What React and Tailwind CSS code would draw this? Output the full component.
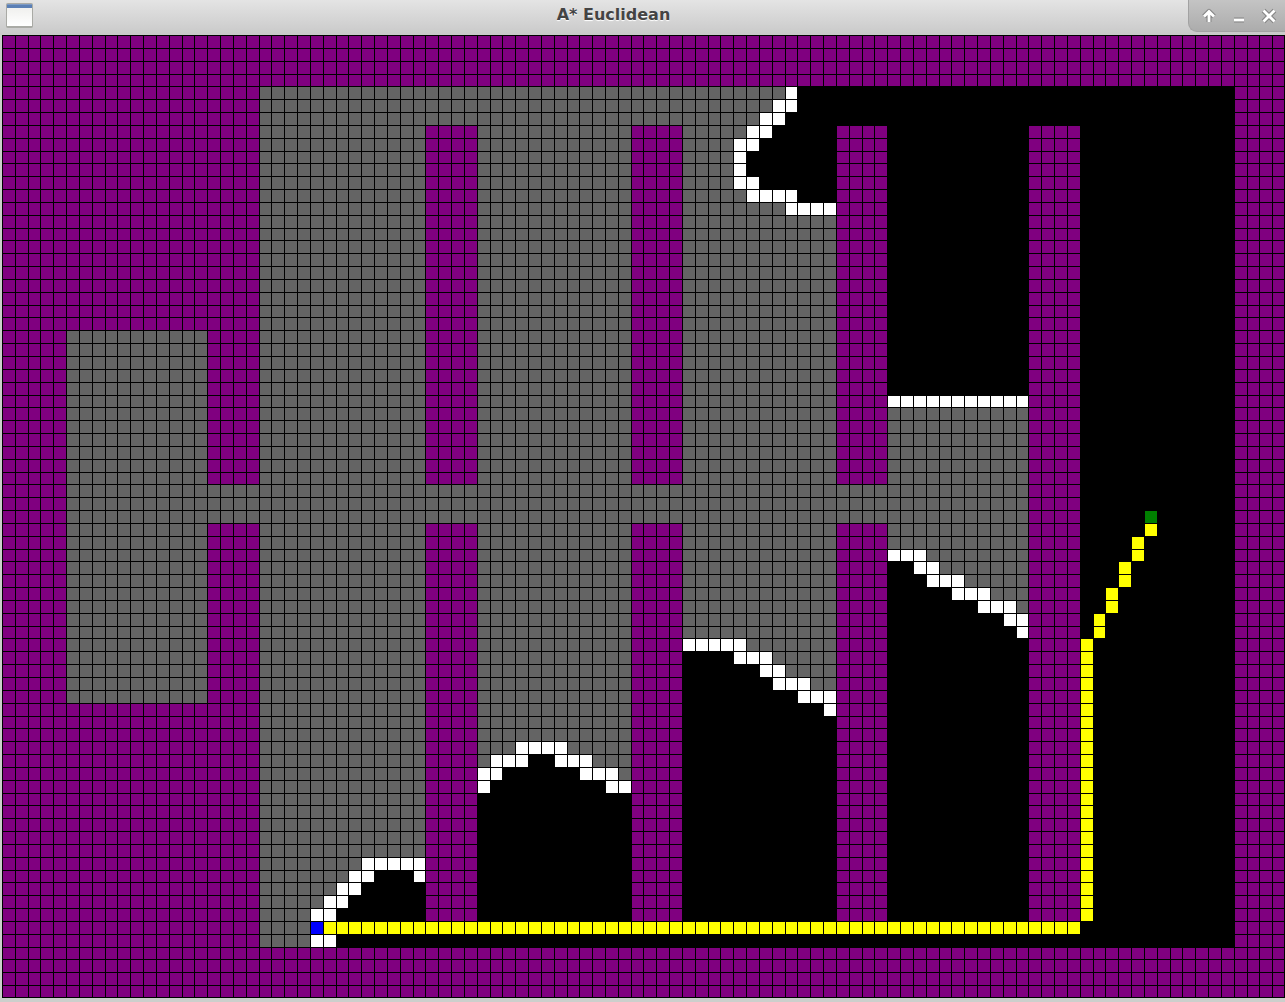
import React from "react";

const COLS = 100;
const ROWS = 75;

const COLORS = {
  wall: "bg-[#800080]",
  closed: "bg-[#646464]",
  open: "bg-white",
  path: "bg-[#ffff00]",
  start: "bg-[#008000]",
  goal: "bg-[#0000ff]",
  empty: "bg-black",
};

// [kind, first column, last column, first row, last row]; later areas cover earlier ones
const AREAS = [
  ["wall", 0, 99, 0, 74],
  ["empty", 20, 95, 4, 70],
  ["closed", 5, 15, 23, 51],
  // first hall
  ["closed", 20, 32, 4, 64],
  ["closed", 20, 26, 65, 65],
  ["closed", 20, 25, 66, 66],
  ["closed", 20, 24, 67, 67],
  ["closed", 20, 23, 68, 70],
  ["open", 28, 32, 64, 64],
  ["closed", 20, 27, 64, 64],
  ["open", 27, 28, 65, 65],
  ["open", 32, 32, 65, 65],
  ["open", 26, 27, 66, 66],
  ["open", 25, 26, 67, 67],
  ["open", 24, 25, 68, 68],
  ["open", 24, 25, 70, 70],
  // second hall
  ["closed", 33, 48, 4, 55],
  ["closed", 37, 37, 56, 56],
  ["closed", 46, 48, 56, 56],
  ["closed", 48, 48, 57, 57],
  ["open", 40, 43, 55, 55],
  ["open", 38, 40, 56, 56],
  ["open", 43, 45, 56, 56],
  ["open", 37, 38, 57, 57],
  ["open", 45, 47, 57, 57],
  ["open", 37, 37, 58, 58],
  ["open", 47, 48, 58, 58],
  // third hall
  ["closed", 49, 60, 4, 4],
  ["closed", 49, 59, 5, 5],
  ["closed", 49, 58, 6, 6],
  ["closed", 49, 57, 7, 7],
  ["closed", 49, 56, 8, 11],
  ["closed", 49, 57, 12, 12],
  ["closed", 49, 60, 13, 13],
  ["closed", 49, 64, 14, 47],
  ["closed", 60, 64, 48, 48],
  ["closed", 61, 64, 49, 49],
  ["closed", 63, 64, 50, 50],
  ["open", 61, 61, 4, 4],
  ["open", 60, 61, 5, 5],
  ["open", 59, 60, 6, 6],
  ["open", 58, 59, 7, 7],
  ["open", 57, 58, 8, 8],
  ["open", 57, 57, 9, 10],
  ["open", 57, 58, 11, 11],
  ["open", 58, 61, 12, 12],
  ["open", 61, 64, 13, 13],
  ["open", 53, 57, 47, 47],
  ["open", 57, 59, 48, 48],
  ["open", 59, 60, 49, 49],
  ["open", 60, 62, 50, 50],
  ["open", 62, 64, 51, 51],
  ["open", 64, 64, 52, 52],
  // fourth hall
  ["open", 69, 79, 28, 28],
  ["closed", 69, 79, 29, 39],
  ["open", 69, 71, 40, 40],
  ["closed", 72, 79, 40, 40],
  ["open", 71, 72, 41, 41],
  ["closed", 73, 79, 41, 41],
  ["open", 72, 74, 42, 42],
  ["closed", 75, 79, 42, 42],
  ["open", 74, 76, 43, 43],
  ["closed", 77, 79, 43, 43],
  ["open", 76, 78, 44, 44],
  ["closed", 79, 79, 44, 44],
  ["open", 78, 79, 45, 45],
  ["open", 79, 79, 46, 46],
  // dividing walls
  ["wall", 33, 36, 7, 68],
  ["wall", 49, 52, 7, 68],
  ["wall", 65, 68, 7, 68],
  ["wall", 80, 83, 7, 68],
  // corridor
  ["closed", 16, 19, 35, 37],
  ["closed", 33, 36, 35, 37],
  ["closed", 49, 52, 35, 37],
  ["closed", 65, 68, 35, 37],
  // route
  ["path", 25, 83, 69, 69],
  ["path", 84, 84, 47, 68],
  ["path", 85, 85, 45, 46],
  ["path", 86, 86, 43, 44],
  ["path", 87, 87, 41, 42],
  ["path", 88, 88, 39, 40],
  ["path", 89, 89, 38, 38],
  ["start", 89, 89, 37, 37],
  ["goal", 24, 24, 69, 69],
];

const grid = Array.from({ length: ROWS }, () => Array(COLS).fill("empty"));
for (const [kind, c0, c1, r0, r1] of AREAS) {
  for (let r = r0; r <= r1; r++) {
    for (let c = c0; c <= c1; c++) grid[r][c] = kind;
  }
}

function ControlIcon({ children }) {
  return (
    <svg viewBox="0 0 16 16" className="size-4" fill="none" aria-hidden="true">
      <g stroke="#858585" strokeWidth="5" strokeLinejoin="round">{children}</g>
      <g stroke="#ffffff" strokeWidth="2.8">{children}</g>
    </svg>
  );
}

function TitleBar() {
  return (
    <header className="grid h-[35px] grid-cols-[1fr_auto_1fr] items-start bg-linear-to-b from-[#e4e4e4] to-[#c9c9c9]">
      <button type="button" aria-label="Window menu" className="ml-[6px] mt-[3px] justify-self-start">
        <svg width="27" height="25" viewBox="0 0 27 25" aria-hidden="true">
          <defs>
            <linearGradient id="pane" x1="0" y1="0" x2="0" y2="1">
              <stop offset="0" stopColor="#f0f0ee" />
              <stop offset="1" stopColor="#ffffff" />
            </linearGradient>
          </defs>
          <rect x="0.5" y="0.5" width="26" height="24" rx="1" fill="#a9aaa5" stroke="#a9aaa5" />
          <rect x="1" y="1" width="25" height="4" fill="#5a7fb5" />
          <rect x="1" y="1" width="25" height="1" fill="#7d9ac4" />
          <rect x="1" y="5" width="25" height="18" fill="url(#pane)" />
        </svg>
      </button>
      <h1 className="pr-[58px] pt-[3px] font-['DejaVu_Sans',sans-serif] text-[16px] leading-[24px] font-bold text-[#444444] [text-shadow:0_1px_1px_#ffffff]">
        A* Euclidean
      </h1>
      <div className="flex h-[32px] w-[97px] items-center gap-[14px] justify-self-end rounded-bl-[9px] border-b border-l border-[#a2a2a2] bg-linear-to-b from-[#c4c4c4] to-[#acacac] pl-[12px]">
        <button type="button" aria-label="Shade" className="shrink-0">
          <ControlIcon>
            <path d="M8 14V4M3 8.5L8 3.5L13 8.5" />
          </ControlIcon>
        </button>
        <button type="button" aria-label="Minimize" className="shrink-0">
          <ControlIcon>
            <path d="M3 12H13" />
          </ControlIcon>
        </button>
        <button type="button" aria-label="Close" className="shrink-0">
          <ControlIcon>
            <path d="M2.5 2.5L13.5 13.5M13.5 2.5L2.5 13.5" />
          </ControlIcon>
        </button>
      </div>
    </header>
  );
}

export default function App() {
  return (
    <div className="min-h-screen overflow-hidden bg-[#cccfcc]">
      <TitleBar />
      <main
        aria-label="Search grid"
        className="ml-[2px] grid aspect-[1283/963] grid-cols-[repeat(100,minmax(0,1fr))] grid-rows-[repeat(75,minmax(0,1fr))] bg-black"
      >
        {grid.flatMap((row, r) =>
          row.map((kind, c) => (
            <div
              key={r * COLS + c}
              className={`border-t border-l border-black ${c === COLS - 1 ? "border-r" : ""} ${r === ROWS - 1 ? "border-b" : ""} ${COLORS[kind]}`}
            />
          ))
        )}
      </main>
    </div>
  );
}
